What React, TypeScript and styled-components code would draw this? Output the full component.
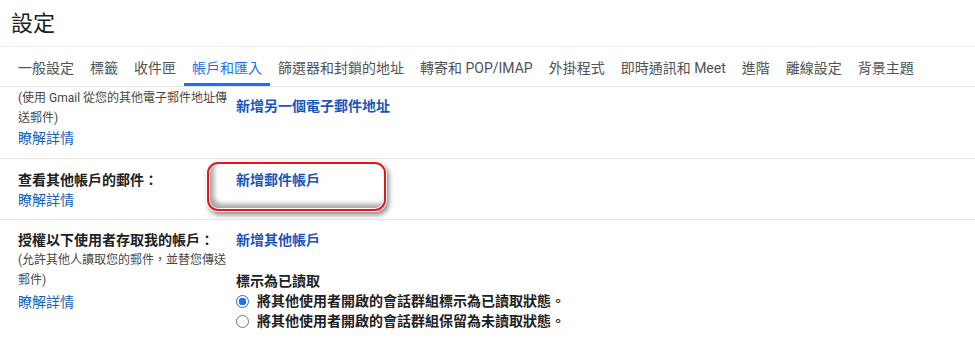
import styled, { createGlobalStyle } from 'styled-components';

const GlobalStyle = createGlobalStyle`
    html, body {
        margin: 0;
        padding: 0;
        background: #fff;
    }
    body {
        font-family: Roboto, Arial, "Noto Sans CJK TC", sans-serif;
        color: #202124;
    }
`

const tabs = [
    '一般設定',
    '標籤',
    '收件匣',
    '帳戶和匯入',
    '篩選器和封鎖的地址',
    '轉寄和 POP/IMAP',
    '外掛程式',
    '即時通訊和 Meet',
    '進階',
    '離線設定',
    '背景主題',
]

export default function App() {
    return (
        <>
            <GlobalStyle />
            <Page>
                <Header>
                    <Title>設定</Title>
                </Header>
                <TabBar>
                    {tabs.map((t) => (
                        <Tab key={t} active={t === '帳戶和匯入'}>{t}</Tab>
                    ))}
                </TabBar>

                <Row top={1} bottom={10}>
                    <LeftCell>
                        <Note>(使用 Gmail 從您的其他電子郵件地址傳送郵件)</Note>
                        <LearnMore>瞭解詳情</LearnMore>
                    </LeftCell>
                    <RightCell offset={8}>
                        <ActionLink>新增另一個電子郵件地址</ActionLink>
                    </RightCell>
                </Row>

                <Row top={11} bottom={9}>
                    <LeftCell>
                        <RowTitle>查看其他帳戶的郵件：</RowTitle>
                        <LearnMore>瞭解詳情</LearnMore>
                    </LeftCell>
                    <RightCell offset={0}>
                        <ActionLink>新增郵件帳戶</ActionLink>
                    </RightCell>
                    <Highlight />
                </Row>

                <Row top={10} bottom={10} last>
                    <LeftCell>
                        <RowTitle>授權以下使用者存取我的帳戶：</RowTitle>
                        <Note>(允許其他人讀取您的郵件，並替您傳送郵件)</Note>
                        <LearnMore gap={2}>瞭解詳情</LearnMore>
                    </LeftCell>
                    <RightCell offset={0}>
                        <ActionLink>新增其他帳戶</ActionLink>
                        <OptionGroup>
                            <GroupTitle>標示為已讀取</GroupTitle>
                            <RadioLine>
                                <Radio checked />
                                將其他使用者開啟的會話群組標示為已讀取狀態。
                            </RadioLine>
                            <RadioLine>
                                <Radio />
                                將其他使用者開啟的會話群組保留為未讀取狀態。
                            </RadioLine>
                        </OptionGroup>
                    </RightCell>
                </Row>
            </Page>
        </>
    );
}

const Page = styled.div`
    width: 975px;
    height: 346px;
    overflow: hidden;
`

const Header = styled.div`
    height: 47px;
    padding: 9px 0 0 11px;
    box-sizing: border-box;
    border-bottom: 1px solid #ececec;
`

const Title = styled.h1`
    margin: 0;
    font-size: 22px;
    font-weight: 400;
    line-height: 30px;
    color: #202124;
`

const TabBar = styled.nav`
    display: flex;
    height: 40px;
    padding-left: 10px;
    border-bottom: 1px solid #e3e3e3;
    box-sizing: border-box;
`

const Tab = styled.div<{ active?: boolean }>`
    display: flex;
    align-items: center;
    padding: 3px 8px 0;
    font-size: 14px;
    white-space: nowrap;
    color: ${(p) => (p.active ? '#1a73e8' : '#4f5356')};
    border-bottom: 3px solid ${(p) => (p.active ? '#1a73e8' : 'transparent')};
`

const Row = styled.div<{ top: number; bottom: number; last?: boolean }>`
    position: relative;
    display: grid;
    grid-template-columns: 236px 1fr;
    padding: ${(p) => p.top}px 0 ${(p) => p.bottom}px;
    border-bottom: ${(p) => (p.last ? 'none' : '1px solid #e5e5e5')};
`

const LeftCell = styled.div`
    padding-left: 18px;
    width: 218px;
`

const RightCell = styled.div<{ offset: number }>`
    padding-top: ${(p) => p.offset}px;
`

const Note = styled.div`
    font-size: 12px;
    line-height: 20px;
    color: #444746;
`

const RowTitle = styled.div`
    font-size: 14px;
    font-weight: 700;
    line-height: 20px;
    color: #202124;
`

const LearnMore = styled.a<{ gap?: number }>`
    display: block;
    margin-top: ${(p) => p.gap ?? 0}px;
    font-size: 14px;
    line-height: 20px;
    color: #1a5fb4;
    cursor: pointer;
`

const ActionLink = styled.a`
    display: block;
    font-size: 14px;
    font-weight: 700;
    line-height: 20px;
    color: #1a56b8;
    cursor: pointer;
`

const OptionGroup = styled.div`
    margin-top: 21px;
`

const GroupTitle = styled.div`
    font-size: 14px;
    font-weight: 700;
    line-height: 20px;
    color: #202124;
`

const RadioLine = styled.label`
    display: flex;
    align-items: center;
    gap: 8px;
    font-size: 14px;
    font-weight: 700;
    line-height: 20px;
    color: #202124;
`

const Radio = styled.span<{ checked?: boolean }>`
    width: 13px;
    height: 13px;
    box-sizing: border-box;
    border-radius: 50%;
    border: 1px solid ${(p) => (p.checked ? '#1a73e8' : '#767676')};
    background: ${(p) => (p.checked ? 'radial-gradient(circle, #1a73e8 0 3.5px, #fff 4px)' : '#fff')};
    flex-shrink: 0;
`

const Highlight = styled.div`
    position: absolute;
    left: 207px;
    top: 3px;
    width: 179px;
    height: 49px;
    box-sizing: border-box;
    border: 2px solid #e8141c;
    border-radius: 11px;
    box-shadow:
        0 0 0 1px #fff,
        2px 3px 5px 1px rgba(0, 0, 0, 0.45),
        inset 0 0 0 1px #fff,
        inset 4px -4px 5px 1px rgba(0, 0, 0, 0.35);
    pointer-events: none;
`
